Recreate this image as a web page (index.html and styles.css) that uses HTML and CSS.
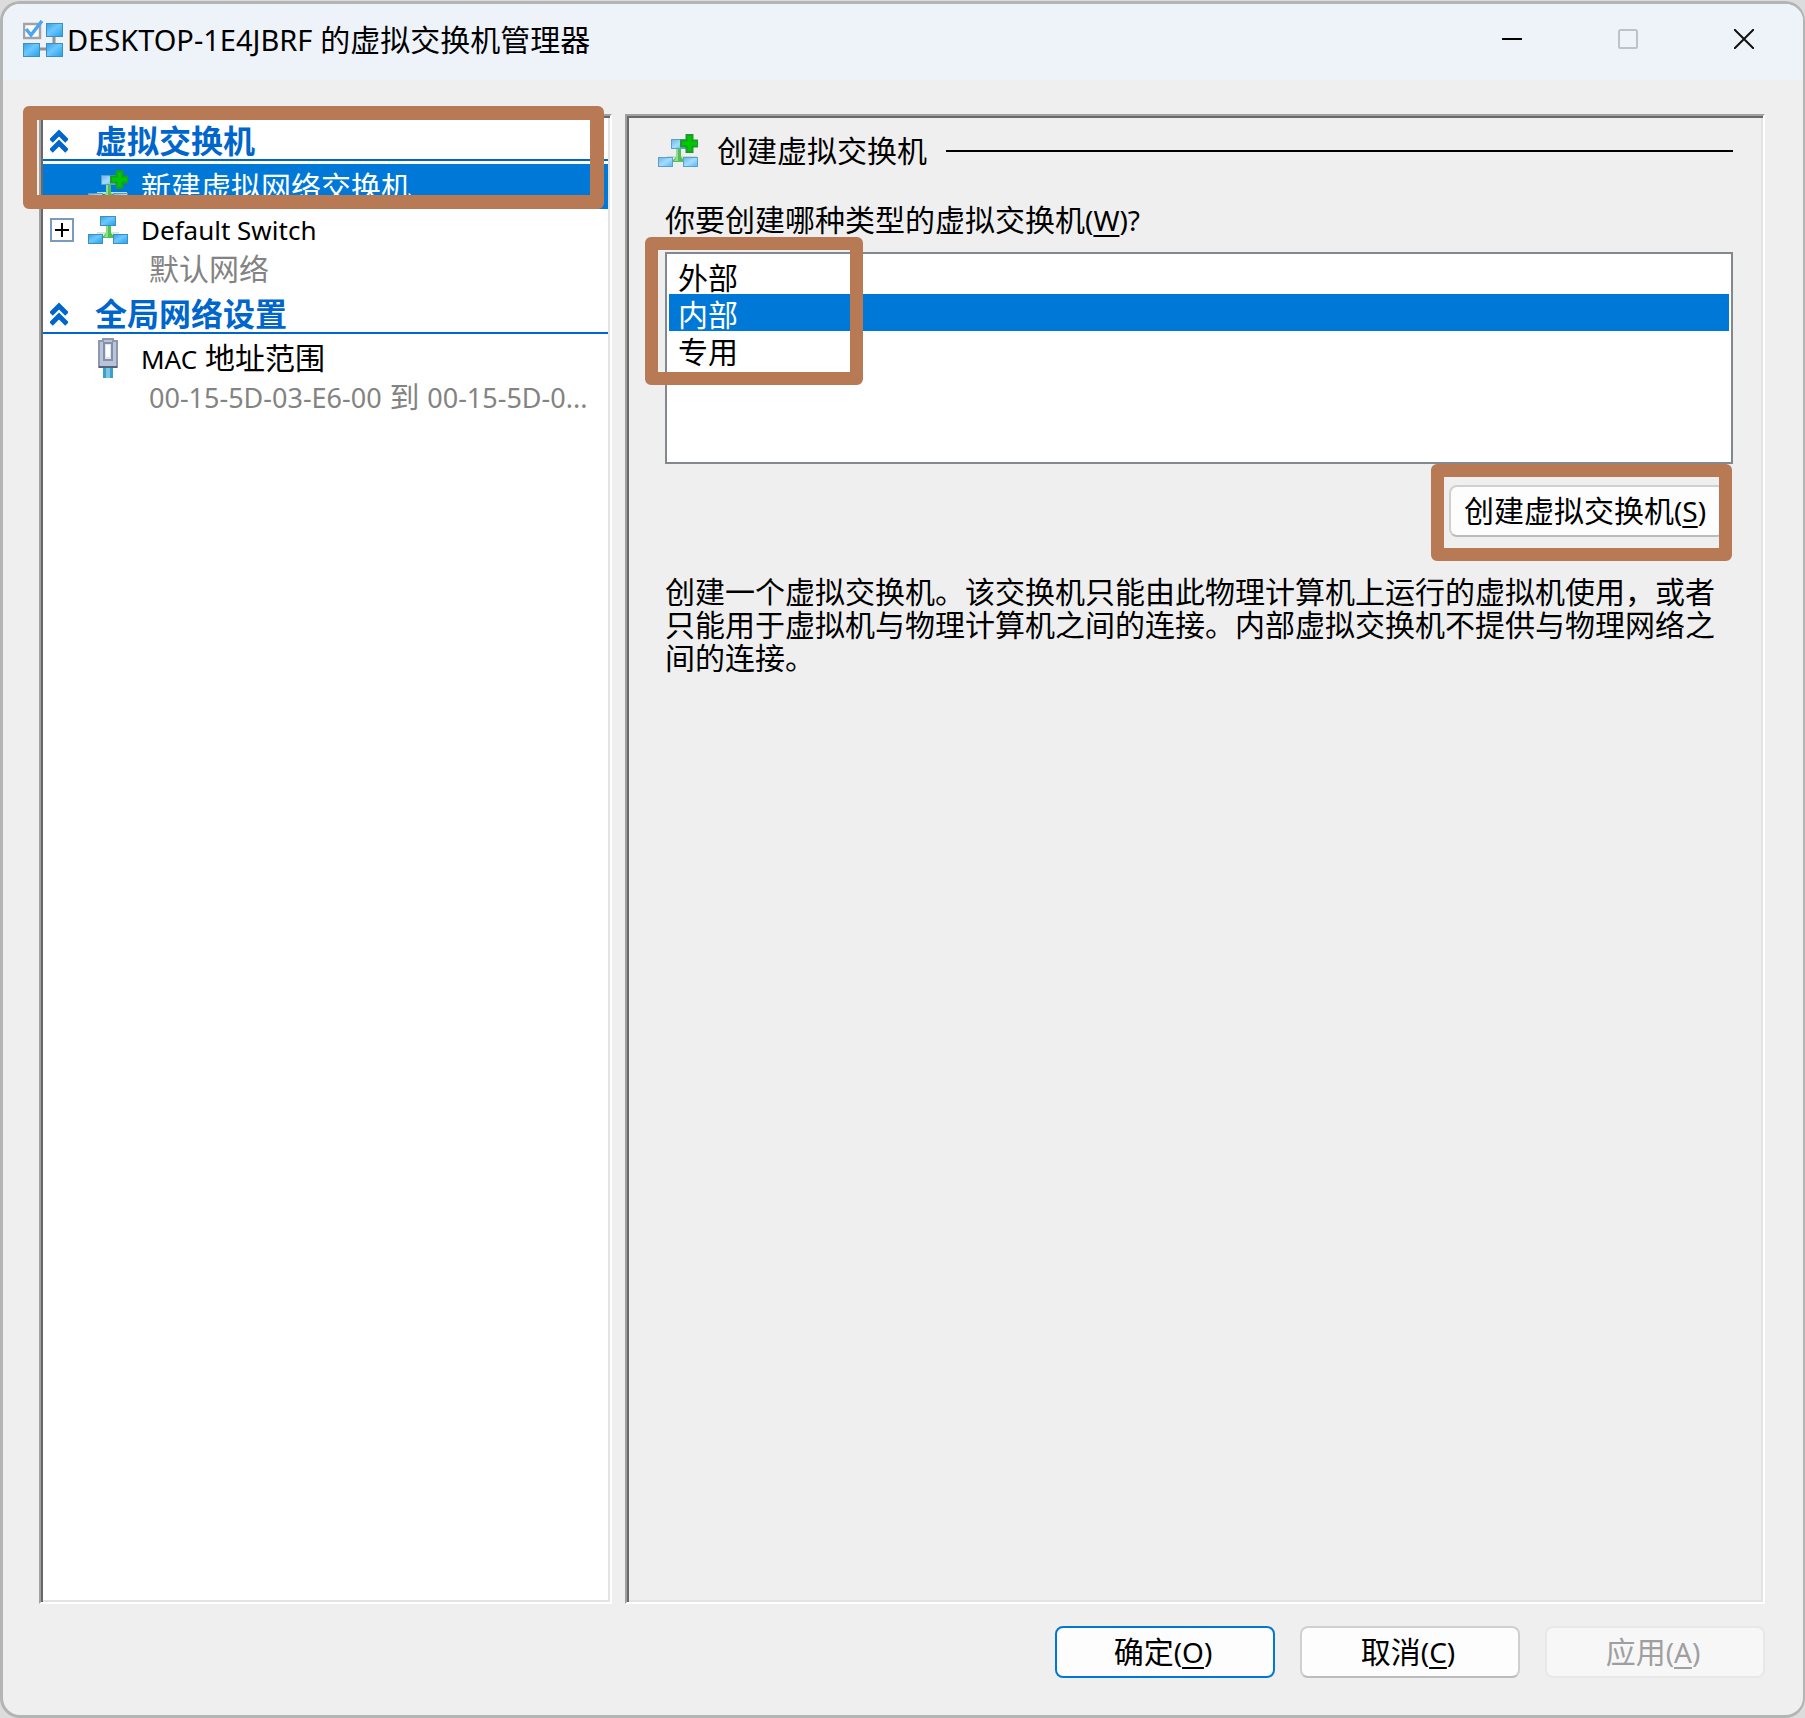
FILE: index.html
```html
<!DOCTYPE html>
<html lang="zh-CN">
<head>
<meta charset="utf-8">
<meta name="viewport" content="width=device-width, initial-scale=1">
<title>DESKTOP-1E4JBRF 的虚拟交换机管理器</title>
<link rel="stylesheet" href="styles.css">
</head>
<body>
<svg class="defs" width="0" height="0" aria-hidden="true">
  <defs>
    <linearGradient id="blue" x1="0" y1="0" x2="1" y2="1">
      <stop offset="0" stop-color="#3a9fe6"/><stop offset=".45" stop-color="#6cc8ff"/><stop offset="1" stop-color="#22a0ee"/>
    </linearGradient>
    <linearGradient id="pale" x1="0" y1="0" x2="1" y2="1">
      <stop offset="0" stop-color="#6ab4e8"/><stop offset=".5" stop-color="#a4dcff"/><stop offset="1" stop-color="#58b8f4"/>
    </linearGradient>
    <symbol id="switch" viewBox="0 0 40 28">
      <path d="M9 16h22v2H9z" fill="#d3ead3"/>
      <path d="M18 9h5v8l3 3v2H15v-2l3-3z" fill="#4fc24f"/>
      <path d="M18 9h2v12h-4l2-3z" fill="#8bdc8b"/>
      <g fill="url(#blue)" stroke="#3c8fbe">
        <rect x="12.500" y=".5" width="15" height="9"/><rect x=".5" y="18.500" width="14" height="9"/><rect x="25.500" y="18.500" width="14" height="9"/>
      </g>
    </symbol>
    <symbol id="switch-new" viewBox="0 0 40 34">
      <path d="M9 22h30v2H9z" fill="#bfe3c4"/>
      <path d="M18 14h5v9l3 3v2H15v-2l3-3z" fill="#55bf55"/>
      <path d="M18 14h2v13h-4l2-3z" fill="#90dc90"/>
      <g fill="url(#pale)" stroke="#5a9fd0">
        <rect x="13.500" y="5.500" width="14" height="9"/><rect x=".5" y="23.500" width="14" height="9"/><rect x="25.500" y="23.500" width="14" height="9"/>
      </g>
      <path d="M28.500 1h6v5.500H40v6h-5.500V18h-6v-5.500H23v-6h5.500z" fill="#00c800" stroke="#1d9a2b" stroke-width="2"/>
    </symbol>
    <symbol id="chevrons" viewBox="0 0 18 24">
      <path d="M1 12 9 4l8 8M1 22l8-8 8 8" fill="none" stroke="#0066cc" stroke-width="5"/>
    </symbol>
  </defs>
</svg>
<main class="window">
  <header class="titlebar">
    <svg class="app-icon" viewBox="0 0 40 38" aria-hidden="true">
      <path d="M31 16v8M17 29h8" stroke="#8f9296" stroke-width="3"/>
      <rect x="1" y="4" width="16" height="14" fill="#fff" stroke="#a3a3a3" stroke-width="2.500"/>
      <path d="M3 9l5 6L19 1" fill="none" stroke="#4aa5f2" stroke-width="3.500"/>
      <g fill="url(#blue)" stroke="#3d8fc0">
        <rect x="23.500" y="3.500" width="16" height="13"/><rect x=".5" y="23.500" width="16" height="13"/><rect x="23.500" y="23.500" width="16" height="13"/>
      </g>
    </svg>
    <h1 class="title"><span class="host">DESKTOP-1E4JBRF</span> 的虚拟交换机管理器</h1>
    <button class="control" type="button" aria-label="最小化"><svg viewBox="0 0 20 20"><path d="M0 10h20" stroke="#000" stroke-width="2"/></svg></button>
    <button class="control" type="button" aria-label="最大化" disabled><svg viewBox="0 0 20 20"><rect x="1" y="1" width="18" height="18" rx="1.500" fill="none" stroke="#bfc3c7" stroke-width="2"/></svg></button>
    <button class="control" type="button" aria-label="关闭"><svg viewBox="0 0 20 20"><path d="M0 0l20 20M20 0L0 20" stroke="#111" stroke-width="2"/></svg></button>
  </header>

  <div class="panels">
    <nav class="panel tree" aria-label="虚拟交换机">
      <button class="group" type="button" aria-expanded="true"><svg class="chevrons"><use href="#chevrons"/></svg>虚拟交换机</button>
      <ul class="items">
        <li class="item selected">
          <div class="row"><svg class="switch-new"><use href="#switch-new"/></svg><span>新建虚拟网络交换机</span></div>
        </li>
        <li class="item">
          <div class="row">
            <button class="expander" type="button" aria-label="展开"><svg viewBox="0 0 24 24"><rect x="1" y="1" width="22" height="22" fill="#fff" stroke="#7b9abf" stroke-width="2"/><path d="M5 12h14M12 5v14" stroke="#000" stroke-width="2"/></svg></button>
            <svg class="switch"><use href="#switch"/></svg><span class="name">Default Switch</span>
          </div>
          <p class="detail">默认网络</p>
        </li>
      </ul>
      <button class="group" type="button" aria-expanded="true"><svg class="chevrons"><use href="#chevrons"/></svg>全局网络设置</button>
      <ul class="items">
        <li class="item">
          <div class="row">
            <svg class="plug" viewBox="0 0 20 40" aria-hidden="true">
              <path d="M5 29h10v11H5z" fill="#3b9fcb"/><path d="M8 29h4v11H8z" fill="#7cc6e4"/>
              <path d="M5 3V1h10v2h4v26H1V3z" fill="#b9c4d8" stroke="#8d99b3" stroke-width="2"/>
              <path d="M1 29h18" stroke="#56627c" stroke-width="2"/>
              <rect x="6" y="5" width="8" height="17" fill="#dfe5ef" stroke="#8390aa" stroke-width="2"/><path d="M8 7h4v12H8z" fill="#fff"/>
            </svg>
            <span><span class="name">MAC</span> 地址范围</span>
          </div>
          <p class="detail"><span class="address">00-15-5D-03-E6-00</span> 到 <span class="address">00-15-5D-0...</span></p>
        </li>
      </ul>
      <span class="marker marker-tree"></span>
    </nav>

    <section class="panel page">
      <h2 class="heading"><svg class="switch-new"><use href="#switch-new"/></svg><span>创建虚拟交换机</span></h2>
      <label class="question" for="kind">你要创建哪种类型的虚拟交换机<span class="latin">(<u>W</u>)?</span></label>
      <div class="anchor">
        <select class="kinds" id="kind" size="5">
          <option>外部</option>
          <option selected>内部</option>
          <option>专用</option>
        </select>
        <span class="marker marker-kinds"></span>
      </div>
      <div class="anchor create">
        <button class="button" type="button">创建虚拟交换机<span class="latin">(<u>S</u>)</span></button>
        <span class="marker marker-create"></span>
      </div>
      <p class="description">创建一个虚拟交换机。该交换机只能由此物理计算机上运行的虚拟机使用，或者只能用于虚拟机与物理计算机之间的连接。内部虚拟交换机不提供与物理网络之间的连接。</p>
    </section>
  </div>

  <footer class="actions">
    <button class="button default" type="button">确定<span class="latin">(<u>O</u>)</span></button>
    <button class="button" type="button">取消<span class="latin">(<u>C</u>)</span></button>
    <button class="button" type="button" disabled>应用<span class="latin">(<u>A</u>)</span></button>
  </footer>
</main>
</body>
</html>
```
FILE: styles.css
```css
* {
  box-sizing: border-box;
}

body {
  display: flex;
  flex-direction: column;
  min-height: 100vh;
  margin: 0;
  padding-top: 1px;
  background: #dcdcdc;
  color: #000;
  font: 30px/36px "Noto Sans", "Noto Sans CJK SC", sans-serif;
}

h1, h2, p, ul {
  margin: 0;
  padding: 0;
  font-size: inherit;
  font-weight: 400;
}

button, select {
  font: inherit;
  color: inherit;
}

svg {
  display: block;
  flex: none;
}

u {
  text-underline-offset: 4px;
  text-decoration-thickness: 2px;
}

.defs {
  position: absolute;
}

.latin {
  font-size: 28px;
}

.host {
  font-size: 29px;
}

.window {
  flex: 1;
  display: flex;
  flex-direction: column;
  border: solid #b3b5b4;
  border-width: 3px 2px 3px 3px;
  border-radius: 20px;
  background: #efefef;
  overflow: hidden;
}

/* Title bar */
.titlebar {
  display: flex;
  align-items: center;
  height: 76px;
  padding: 0 1px 6px 20px;
  background: #eef3fa;
}

.app-icon {
  width: 40px;
  height: 38px;
}

.title {
  flex: 1;
  padding: 2px 0 0 4px;
  white-space: nowrap;
}

.control {
  display: grid;
  place-items: center;
  width: 116px;
  height: 70px;
  padding: 0;
  border: 0;
  background: none;
}

.control svg {
  width: 20px;
  height: 20px;
}

/* Sunken panels */
.panels {
  flex: 1;
  display: grid;
  grid-template-columns: 573px minmax(0, 1fr);
  gap: 13px;
  padding: 34px 38px 0 36px;
}

.panel {
  position: relative;
  border: 2px solid;
  border-color: #a0a0a0 #fff #fff #a0a0a0;
  box-shadow: inset 2px 2px #696969, inset -2px -2px #e3e3e3;
  padding: 3px 2px 2px;
}

.tree {
  background: #fff;
}

.group {
  display: flex;
  align-items: center;
  gap: 27px;
  width: 100%;
  height: 42px;
  margin-bottom: 3px;
  padding: 3px 0 0 7px;
  border: 0;
  border-bottom: 2px solid #0066cc;
  background: none;
  color: #0066cc;
  font-size: 32px;
  font-weight: 700;
}

.items + .group {
  margin-top: 5px;
}

.chevrons {
  width: 18px;
  height: 24px;
}

.items {
  list-style: none;
}

.row {
  display: grid;
  grid-template-columns: 38px 40px 1fr;
  align-items: center;
  column-gap: 7px;
  height: 42px;
}

.row > svg {
  grid-column: 2;
  justify-self: center;
}

.row > span {
  padding-left: 6px;
}

.selected .row {
  height: 45px;
  background: #0078d7;
  color: #fff;
}

.expander {
  justify-self: end;
  width: 31px;
  height: 24px;
  padding: 0;
  border: 0;
  background: none;
}

.expander svg {
  width: 24px;
  height: 24px;
}

.switch {
  width: 40px;
  height: 28px;
}

.switch-new {
  width: 40px;
  height: 34px;
}

.plug {
  width: 20px;
  height: 40px;
}

.name {
  font-size: 26px;
}

.detail {
  padding-left: 106px;
  color: #838383;
  white-space: nowrap;
}

.address {
  font-size: 27px;
}

/* Settings page */
.page {
  padding: 17px 30px 0 38px;
}

.heading {
  display: flex;
  align-items: center;
  gap: 19px;
  height: 36px;
  margin-left: -7px;
}

.heading::after {
  content: "";
  flex: 1;
  height: 2px;
  background: #000;
}

.question {
  display: block;
  height: 50px;
  margin-top: 33px;
}

.anchor {
  position: relative;
}

.kinds {
  display: block;
  width: 100%;
  height: 212px;
  padding: 3px 2px;
  border: 2px solid #828790;
  border-radius: 0;
  background: #fff;
  font-weight: 300;
  outline: 0;
  overflow: hidden;
}

.kinds option {
  display: flex;
  align-items: center;
  height: 37px;
  min-height: 0;
  padding: 0 9px;
}

.kinds option:checked {
  background: #0078d7 linear-gradient(#0078d7, #0078d7);
  color: #fff;
  -webkit-text-fill-color: #fff;
}

.create {
  display: flex;
  justify-content: flex-end;
  padding: 21px 8px 0 0;
}

.button {
  width: 220px;
  height: 52px;
  padding: 0 4px 0 0;
  border: 2px solid #d0d0d0;
  border-bottom-color: #bcbcbc;
  border-radius: 8px;
  background: #fdfdfd;
  white-space: nowrap;
}

.create .button {
  width: 276px;
}

.button.default {
  border-color: #0078d4;
}

.button:disabled {
  border-color: #e8e8e8;
  background: #f7f7f7;
  color: #9f9f9f;
}

.description {
  margin-top: 38px;
  line-height: 33px;
}

.actions {
  display: flex;
  justify-content: flex-end;
  gap: 25px;
  padding: 22px 38px 37px;
}

/* Callout frames drawn over the controls */
.marker {
  position: absolute;
  z-index: 1;
  border: 13px solid #b87955;
  border-radius: 6px;
  pointer-events: none;
}

.marker-tree {
  top: -10px;
  right: 6px;
  left: -18px;
  height: 103px;
  border-width: 14px;
}

.marker-kinds {
  top: -15px;
  left: -20px;
  width: 218px;
  height: 148px;
}

.marker-create {
  top: 0;
  right: 1px;
  width: 301px;
  height: 97px;
}
```
